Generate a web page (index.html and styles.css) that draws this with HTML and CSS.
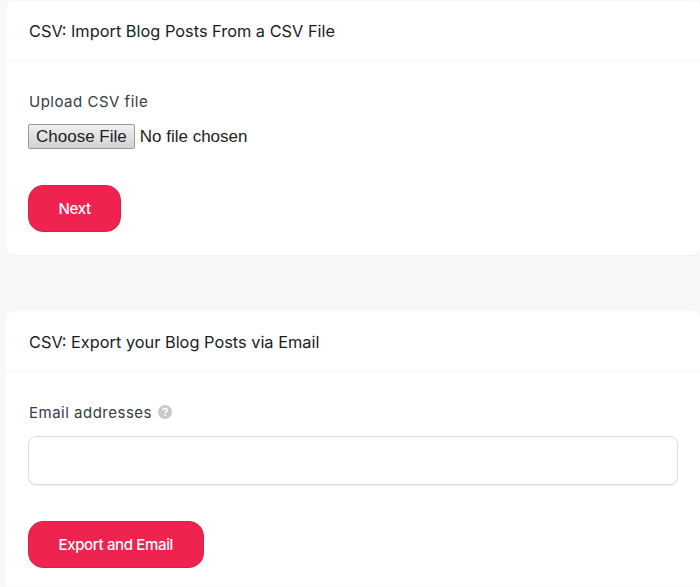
FILE: index.html
```html
<!DOCTYPE html>
<html>
<head lang="en">
    <meta charset="UTF-8">
    <title>CSV Import and Export</title>
    <link rel="stylesheet" href="styles.css">
</head>
<body>

<!-- import -->
<div class="card card-import">
    <h4 class="card-title">CSV: Import Blog Posts From a CSV File</h4>
    <div class="card-body">
        <label class="field-label">Upload CSV file</label>
        <input class="file-input" type="file">
        <button class="btn btn-next" type="button">Next</button>
    </div>
</div>

<!-- export -->
<div class="card card-export">
    <h4 class="card-title">CSV: Export your Blog Posts via Email</h4>
    <div class="card-body">
        <label class="field-label">
            Email addresses
            <svg class="help-icon" viewBox="0 0 14 14" width="14" height="14">
                <circle cx="7" cy="7" r="7" fill="#c9c9c9"/>
                <path d="M4.9 5.4C5 4.2 5.9 3.5 7.1 3.5C8.3 3.5 9.2 4.2 9.2 5.3C9.2 6.7 7.2 6.8 7.2 8.2" fill="none" stroke="#fff" stroke-width="1.6"/>
                <circle cx="7.2" cy="10.3" r="1" fill="#fff"/>
            </svg>
        </label>
        <input class="text-input" type="text">
        <button class="btn" type="button">Export and Email</button>
    </div>
</div>

</body>
</html>
```

FILE: styles.css
```css
body, h4 {
    padding: 0;
    margin: 0;
}

body {
    height: 587px;
    overflow: hidden;
    padding: 1px 0 0 6px;
    box-sizing: border-box;
    background: #f7f8fa;
    font-family: Inter, "Liberation Sans", sans-serif;
    color: #2b2f38;
}

.card {
    background: #fff;
    border-radius: 8px;
    box-shadow: 0 1px 1px #f1f2f4;
}

.card-export {
    margin-top: 56px;
    border-radius: 8px 8px 0 0;
    box-shadow: none;
}

.card-title {
    height: 59px;
    line-height: 60px;
    padding-left: 23px;
    border-bottom: 1px solid #f3f4f6;
    font-size: 16.35px;
    font-weight: 400;
    color: #1a1d24;
}

.card-export .card-title {
    height: 60px;
    line-height: 62px;
}

.card-body {
    display: flex;
    flex-direction: column;
    align-items: flex-start;
    padding: 30px 22px 23px;
}

.card-export .card-body {
    padding-bottom: 18px;
}

.field-label {
    display: flex;
    align-items: center;
    gap: 6px;
    height: 20px;
    padding-left: 1px;
    font-size: 15px;
    letter-spacing: 0.5px;
    color: #363b45;
}

.help-icon {
    flex: none;
}

.file-input {
    margin-top: 13px;
    font: 17px "Liberation Sans", sans-serif;
    color: #222;
}

.file-input::file-selector-button {
    height: 25px;
    margin-right: 5px;
    padding: 0 7px;
    border: 1px solid #9a9a9a;
    border-radius: 2px;
    background: linear-gradient(#f0f0f0, #d2d2d2);
    font: 17px "Liberation Sans", sans-serif;
    color: #222;
}

.text-input {
    width: 650px;
    height: 49px;
    margin-top: 14px;
    box-sizing: border-box;
    border: 1px solid #dcdde0;
    border-radius: 8px;
    background: #fff;
    box-shadow: 0 1px 1px #eceded;
}

.btn {
    height: 47px;
    margin-top: 36px;
    padding: 0 29.5px 1px;
    border: 1px solid #dc2149;
    border-radius: 15px;
    background: #ef234f;
    color: #fff;
    font-family: Inter, "Liberation Sans", sans-serif;
    font-size: 15px;
    font-weight: 500;
    letter-spacing: -0.35px;
}
```
